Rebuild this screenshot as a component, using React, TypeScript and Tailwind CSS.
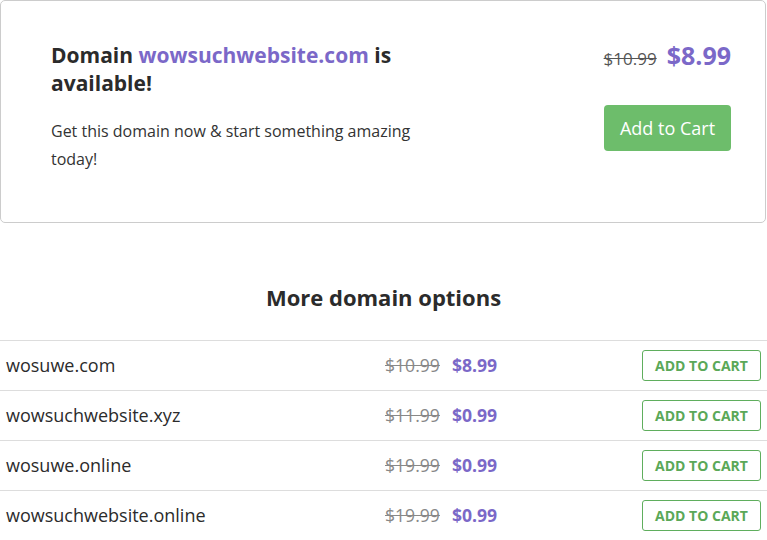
const options = [
  { name: 'wosuwe.com', oldPrice: '$10.99', price: '$8.99' },
  { name: 'wowsuchwebsite.xyz', oldPrice: '$11.99', price: '$0.99' },
  { name: 'wosuwe.online', oldPrice: '$19.99', price: '$0.99' },
  { name: 'wowsuchwebsite.online', oldPrice: '$19.99', price: '$0.99' },
]

export default function App() {
  return (
    <div className="w-[767px] bg-white text-[#2b2b2b]" style={{ fontFamily: '"Open Sans", sans-serif' }}>
      <div className="flex h-[223px] w-[766px] justify-between rounded-[5px] border border-[#cccccc] pl-[50px] pr-[34px] pt-[40px]">
        <div className="w-[372px]">
          <h2 className="text-[21px] font-bold leading-[28px] text-[#2b2b2b]">
            Domain <span className="text-[#7b68c8]">wowsuchwebsite.com</span> is available!
          </h2>
          <p className="mt-[20px] text-[16px] leading-[28px] text-[#333]">
            Get this domain now &amp; start something amazing today!
          </p>
        </div>
        <div className="flex flex-col items-end">
          <div className="flex items-baseline gap-[10px] leading-[28px]">
            <span className="text-[17px] text-[#555] line-through">$10.99</span>
            <span className="text-[25px] font-bold text-[#7b68c8]">$8.99</span>
          </div>
          <button className="mt-[32px] h-[46px] w-[127px] rounded-[4px] bg-[#6dbd6b] text-[18px] text-white">
            Add to Cart
          </button>
        </div>
      </div>

      <h3 className="mt-[59px] mb-[28px] text-center text-[22px] font-bold leading-[30px] text-[#2b2b2b]">
        More domain options
      </h3>

      <div>
        {options.map((o) => (
          <div
            key={o.name}
            className="grid h-[50px] grid-cols-[379px_1fr_auto] items-center border-t border-[#dddddd] pl-[6px] pr-[6px]"
          >
            <span className="text-[18px] text-[#2b2b2b]">{o.name}</span>
            <div className="flex items-baseline gap-[12px]">
              <span className="text-[17.6px] text-[#888] line-through">{o.oldPrice}</span>
              <span className="text-[17.6px] font-bold text-[#7b68c8]">{o.price}</span>
            </div>
            <button className="h-[31px] w-[119px] rounded-[3px] border border-[#5fae5d] text-[14px] font-bold text-[#5aa858]">
              ADD TO CART
            </button>
          </div>
        ))}
      </div>
    </div>
  )
}
